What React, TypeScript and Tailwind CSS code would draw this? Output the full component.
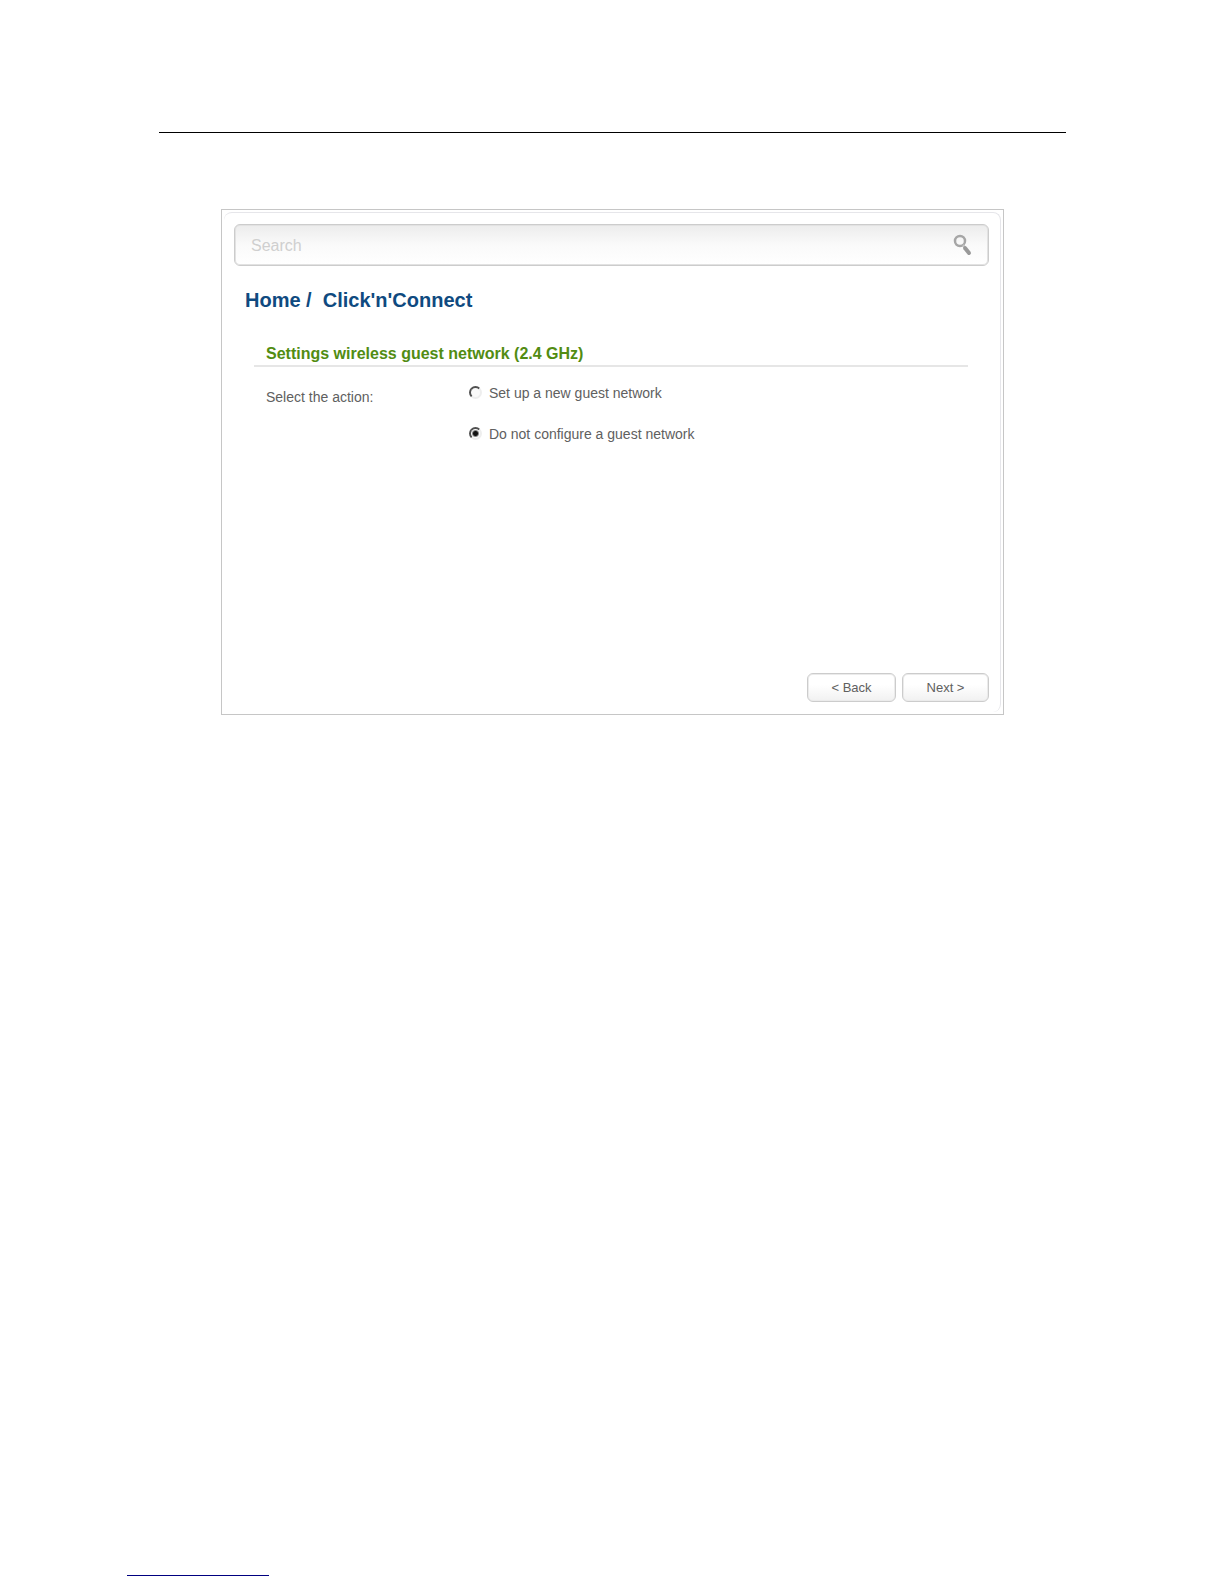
import { useState } from "react";

const actions = [
    { value: "setup", label: "Set up a new guest network" },
    { value: "skip", label: "Do not configure a guest network" },
];

const SearchIcon = () => {
    return <svg width="20" height="24" viewBox="0 0 20 24" fill="none">
        <circle cx="8" cy="7" r="5" stroke="#a6a6a6" strokeWidth="2.500" />
        <path d="M11 11l2 2" stroke="#c4c4c4" strokeWidth="2" />
        <path d="M13 14l4 5" stroke="#999999" strokeWidth="4" strokeLinecap="round" />
    </svg>
}

const App = () => {
    const [action, setAction] = useState("skip");
    const [search, setSearch] = useState("");

    return (
        <div className="flex min-h-screen flex-col bg-white font-['Liberation_Sans',Arial,sans-serif] text-[#606060]">
            <header className="mr-[158px] ml-[159px] mt-[132px] border-t border-black"></header>

            <main className="mr-[220px] ml-[221px] mt-[76px] border border-[#c6c6c6] p-[2px]">
                <div className="rounded-lg border-t border-r border-[#e6e6ea] pt-[11px] pr-[11px] pb-[10px] pl-[10px]">
                    <form
                        role="search"
                        onSubmit={(e) => e.preventDefault()}
                        className="flex h-[42px] items-center rounded-md border border-[#cccccc] bg-linear-to-b from-[#ececec] via-[#fafafa] via-50% to-white pt-px pr-4 pl-4 shadow-[inset_0_0_0_1px_#e2e2e2]"
                    >
                        <input
                            type="text"
                            aria-label="Search"
                            placeholder="Search"
                            value={search}
                            onChange={(e) => setSearch(e.target.value)}
                            className="min-w-0 flex-1 bg-transparent text-base outline-none placeholder:text-[#cfcfcf]"
                        />
                        <button type="submit" aria-label="Find">
                            <SearchIcon />
                        </button>
                    </form>

                    <h1 className="mt-5 ml-[11px] text-xl font-bold whitespace-pre text-[#0f4a80]">
                        <a href="#home">Home /</a>{"  "}Click'n'Connect
                    </h1>

                    <section className="mr-[21px] ml-5">
                        <h2 className="mt-7 border-b-2 border-[#e6e6e6] pl-3 text-base leading-[23px] font-bold text-[#518c12]">
                            Settings wireless guest network (2.4 GHz)
                        </h2>
                        <div className="flex pt-4 pl-3 text-sm leading-5">
                            <p id="action-label" className="mt-1 w-[203px]">Select the action:</p>
                            <div role="radiogroup" aria-labelledby="action-label" className="flex flex-col gap-[21px]">
                                {actions.map((item) =>
                                    <label key={item.value} className="flex items-center gap-[7px]">
                                        <input
                                            type="radio"
                                            name="action"
                                            value={item.value}
                                            checked={action === item.value}
                                            onChange={() => setAction(item.value)}
                                            className="mb-px size-[13px] appearance-none rounded-full border-2 border-t-[#505050] border-r-[#eeeeee] border-b-[#eeeeee] border-l-[#505050] bg-[#fafafa] checked:bg-[radial-gradient(circle,#111111_2px,#fafafa_4px)]"
                                        />
                                        {item.label}
                                    </label>
                                )}
                            </div>
                        </div>
                    </section>

                    <div className="mt-[229px] flex justify-end gap-[6px] text-[13px]">
                        <button
                            type="button"
                            className="h-[29px] w-[89px] rounded-md border border-[#cccccc] bg-linear-to-b from-white via-white via-40% to-[#f1f1f1] shadow-[inset_0_0_0_1px_#ebebeb]"
                        >
                            &lt; Back
                        </button>
                        <button
                            type="button"
                            className="h-[29px] w-[87px] rounded-md border border-[#cccccc] bg-linear-to-b from-white via-white via-40% to-[#f1f1f1] shadow-[inset_0_0_0_1px_#ebebeb]"
                        >
                            Next &gt;
                        </button>
                    </div>
                </div>
            </main>

            <footer className="mt-auto mb-2 ml-[127px] w-[142px] border-t border-[#000080]"></footer>
        </div>
    );
}

export default App;
